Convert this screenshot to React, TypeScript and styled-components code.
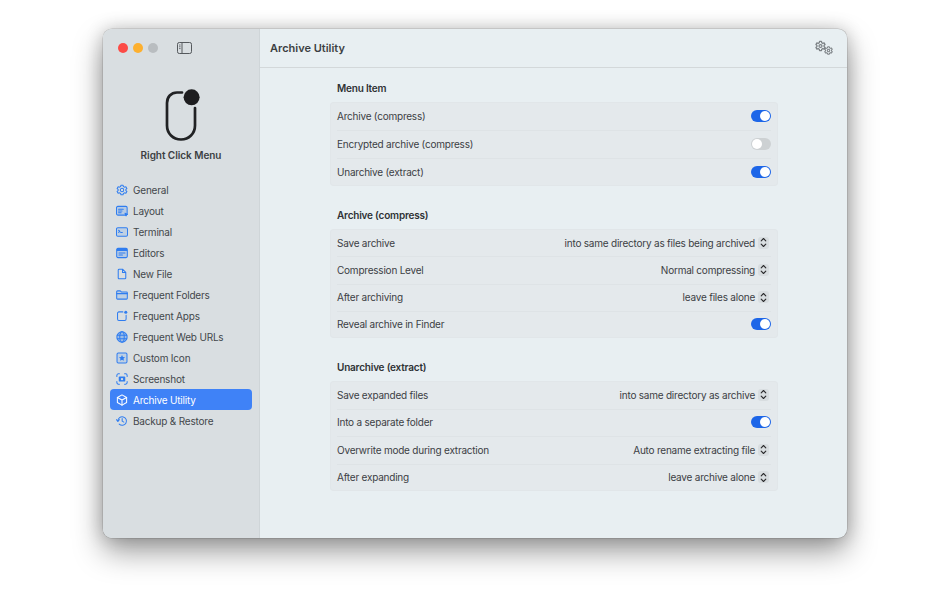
import React from 'react'
import styled, { createGlobalStyle } from 'styled-components'

const GlobalStyle = createGlobalStyle`
  html, body {
    margin: 0;
    padding: 0;
    background: #fff;
  }
  body {
    font-family: Inter, 'Liberation Sans', sans-serif;
    -webkit-font-smoothing: antialiased;
  }
`

const navItems = [
  { label: 'General', icon: 'gear' },
  { label: 'Layout', icon: 'layout' },
  { label: 'Terminal', icon: 'terminal' },
  { label: 'Editors', icon: 'editors' },
  { label: 'New File', icon: 'file' },
  { label: 'Frequent Folders', icon: 'folder' },
  { label: 'Frequent Apps', icon: 'apps' },
  { label: 'Frequent Web URLs', icon: 'globe' },
  { label: 'Custom Icon', icon: 'star' },
  { label: 'Screenshot', icon: 'screenshot' },
  { label: 'Archive Utility', icon: 'cube', active: true },
  { label: 'Backup & Restore', icon: 'restore' },
]

const sections = [
  {
    title: 'Menu Item',
    rowHeight: 28,
    rows: [
      { label: 'Archive (compress)', on: true },
      { label: 'Encrypted archive (compress)', on: false },
      { label: 'Unarchive (extract)', on: true },
    ],
  },
  {
    title: 'Archive (compress)',
    rowHeight: 27.25,
    rows: [
      { label: 'Save archive', value: 'into same directory as files being archived' },
      { label: 'Compression Level', value: 'Normal compressing' },
      { label: 'After archiving', value: 'leave files alone' },
      { label: 'Reveal archive in Finder', on: true },
    ],
  },
  {
    title: 'Unarchive (extract)',
    rowHeight: 27.5,
    rows: [
      { label: 'Save expanded files', value: 'into same directory as archive' },
      { label: 'Into a separate folder', on: true },
      { label: 'Overwrite mode during extraction', value: 'Auto rename extracting file' },
      { label: 'After expanding', value: 'leave archive alone' },
    ],
  },
]

const NavIcon = ({ name, active }: { name: string; active?: boolean }) => {
  const c = active ? '#fff' : '#2f7df0'
  const common = { fill: 'none', stroke: c, strokeWidth: 1.2, strokeLinejoin: 'round' as const, strokeLinecap: 'round' as const }
  return (
    <svg width="12" height="12" viewBox="0 0 14 14">
      {name === 'gear' && (
        <g {...common}>
          <path d="M5.8 1.4h2.4l.4 1.6 1.3.7 1.6-.5 1.2 2.1-1.2 1.1v1.2l1.2 1.1-1.2 2.1-1.6-.5-1.3.7-.4 1.6H5.8l-.4-1.6-1.3-.7-1.6.5-1.2-2.1 1.2-1.1V6.400L1.3 5.3l1.2-2.1 1.6.5 1.3-.7z" />
          <circle cx="7" cy="7" r="2" />
        </g>
      )}
      {name === 'layout' && (
        <g {...common}>
          <rect x="0.6" y="1.6" width="12.4" height="10.2" rx="1.5" fill={c} fillOpacity="0.2" />
          <path d="M3 5h5.500M3 7h4M3 9h3" />
          <path d="M10.500 9.500l3 1.400-1.300.5-.5 1.300z" fill={c} />
        </g>
      )}
      {name === 'terminal' && (
        <g {...common}>
          <rect x="0.6" y="2" width="12.800" height="10" rx="1.5" fill={c} fillOpacity="0.15" />
          <path d="M3 5l1.600 1.200L3 7.400M5.400 7.600h2" />
        </g>
      )}
      {name === 'editors' && (
        <g {...common}>
          <rect x="0.8" y="1.600" width="12.400" height="10.800" rx="1.5" fill={c} fillOpacity="0.2" />
          <path d="M1 3.400h12" strokeWidth="2.800" strokeLinecap="butt" />
          <path d="M3.500 7h7M3.500 9.400h4" />
        </g>
      )}
      {name === 'file' && (
        <path {...common} d="M2.600 2.400c0-.6.4-1 1-1h4L11.400 5v6.600c0 .6-.4 1-1 1H3.600c-.6 0-1-.4-1-1zM7.600 1.500v3.700h3.800" />
      )}
      {name === 'folder' && (
        <g {...common}>
          <path d="M0.800 3.200c0-.6.4-1 1-1h3.200l1.200 1.200h6c.6 0 1 .4 1 1v6.400c0 .6-.4 1-1 1H1.800c-.6 0-1-.4-1-1z" fill={c} fillOpacity="0.15" />
          <path d="M0.800 5.400h12.400" />
        </g>
      )}
      {name === 'apps' && (
        <g {...common}>
          <path d="M8 2.200H3.400c-.9 0-1.600.7-1.600 1.600v6.800c0 .9.7 1.600 1.600 1.600h6.800c.9 0 1.600-.7 1.600-1.600V6" />
          <circle cx="11.400" cy="2.600" r="1.800" fill={c} stroke="none" />
        </g>
      )}
      {name === 'globe' && (
        <g {...common}>
          <circle cx="7" cy="7" r="6" fill={c} fillOpacity="0.35" />
          <ellipse cx="7" cy="7" rx="2.600" ry="6" />
          <path d="M1.400 5h11.200M1.400 9h11.200" />
        </g>
      )}
      {name === 'star' && (
        <g {...common}>
          <rect x="1.200" y="1.200" width="11.600" height="11.600" rx="1.400" fill={c} fillOpacity="0.15" />
          <path d="M7 3.400l1.100 2.300 2.500.3-1.800 1.700.4 2.500L7 9.100l-2.200 1.100.4-2.500-1.800-1.700 2.500-.3z" fill={c} stroke="none" />
        </g>
      )}
      {name === 'screenshot' && (
        <g {...common}>
          <path d="M1 4V2.800C1 1.800 1.800 1 2.800 1H4M10 1h1.200c1 0 1.800.8 1.800 1.800V4M13 10v1.200c0 1-.8 1.800-1.800 1.800H10M4 13H2.800C1.800 13 1 12.200 1 11.200V10" />
          <rect x="3.200" y="4.200" width="7.600" height="5.800" rx="1" fill={c} stroke="none" />
          <circle cx="7" cy="7.100" r="1.400" fill="#d9dee1" stroke="none" />
        </g>
      )}
      {name === 'cube' && (
        <g {...common}>
          <path d="M7 1l5.400 3v6L7 13l-5.400-3V4z" />
          <path d="M1.600 4L7 7l5.400-3M7 7v6" />
        </g>
      )}
      {name === 'restore' && (
        <g {...common}>
          <path d="M2.200 7a5 5 0 1 1 1.500 3.600" />
          <path d="M.5 5.500l1.700 1.900L4 5.500" />
          <path d="M7.200 4.200v3l2 1.100" />
        </g>
      )}
    </svg>
  )
}

const SmallGear = ({ size, x, y }: { size: number; x: number; y: number }) => (
  <g transform={`translate(${x} ${y}) scale(${size / 14})`} fill="none" stroke="#7c8185" strokeWidth="1.6" strokeLinejoin="round">
    <path d="M5.800 1.200h2.400l.4 1.700 1.300.7 1.700-.5 1.200 2.100-1.300 1.200v1.200l1.300 1.200-1.200 2.100-1.700-.5-1.300.7-.4 1.700H5.800l-.4-1.700-1.300-.7-1.700.5-1.200-2.100 1.300-1.200V6.400L1.200 5.200l1.200-2.100 1.700.5 1.300-.7z" />
    <circle cx="7" cy="7" r="1.900" />
  </g>
)

const App = () => {
  return (
    <Page>
      <GlobalStyle />
      <Window>
        <Sidebar>
          <TrafficRow>
            <Light color="#fc4b46" />
            <Light color="#fdb02f" />
            <Light color="#b9bdc0" />
            <SidebarToggle>
              <svg width="15" height="12" viewBox="0 0 15 12" fill="none" stroke="#55595d" strokeWidth="1">
                <rect x="0.5" y="0.5" width="14" height="11" rx="1.800" />
                <path d="M5 0.500v11" />
                <path d="M2 3h1.600M2 4.800h1.600M2 6.600h1.600" strokeWidth="0.8" />
              </svg>
            </SidebarToggle>
          </TrafficRow>
          <Brand>
            <svg width="40" height="56" viewBox="0 0 40 56" fill="none">
              <path d="M21 3.500h-5C10 3.500 6 8 6 14v22.500c0 8 6 14 14 14s14-6 14-14V19" stroke="#212224" strokeWidth="2.700" strokeLinecap="round" />
              <circle cx="30.600" cy="8.300" r="8" fill="#1d1d1f" />
            </svg>
            <BrandName>Right Click Menu</BrandName>
          </Brand>
          <Nav>
            {navItems.map((item) => (
              <NavItem key={item.label} $active={item.active}>
                <NavIcon name={item.icon} active={item.active} />
                <span>{item.label}</span>
              </NavItem>
            ))}
          </Nav>
        </Sidebar>
        <Main>
          <Header>
            <HeaderTitle>Archive Utility</HeaderTitle>
            <svg width="20" height="16" viewBox="0 0 20 16">
              <SmallGear size={11} x={1} y={0.5} />
              <SmallGear size={9} x={10} y={6} />
            </svg>
          </Header>
          <Content>
            {sections.map((section) => (
              <Section key={section.title}>
                <SectionTitle>{section.title}</SectionTitle>
                <Group>
                  {section.rows.map((row) => (
                    <Row key={row.label} $height={section.rowHeight}>
                      <span>{row.label}</span>
                      {row.value ? (
                        <Select>
                          <span>{row.value}</span>
                          <Stepper>
                            <svg width="7" height="11" viewBox="0 0 7 11" fill="none" stroke="#2c2c2e" strokeWidth="1.1" strokeLinecap="round" strokeLinejoin="round">
                              <path d="M1.200 3.800L3.500 1.500l2.300 2.300M1.200 7.200l2.300 2.300 2.300-2.300" />
                            </svg>
                          </Stepper>
                        </Select>
                      ) : (
                        <Toggle $on={row.on} />
                      )}
                    </Row>
                  ))}
                </Group>
              </Section>
            ))}
          </Content>
        </Main>
      </Window>
    </Page>
  )
}

const Page = styled.div`
  width: 950px;
  height: 594px;
  padding: 29px 103px 56px;
  box-sizing: border-box;
  overflow: hidden;
  background: #fff;
`

const Window = styled.div`
  display: flex;
  height: 509px;
  border-radius: 9px;
  overflow: hidden;
  background: #e8eff2;
  box-shadow: 0 0 0 0.5px rgba(0, 0, 0, 0.18), 0 14px 30px rgba(0, 0, 0, 0.38), 0 0 18px rgba(0, 0, 0, 0.2);
`

const Sidebar = styled.aside`
  width: 157px;
  flex-shrink: 0;
  box-sizing: border-box;
  padding: 0 7px;
  background: #d9dee1;
  border-right: 1px solid #cfd5d8;
  display: flex;
  flex-direction: column;
`

const TrafficRow = styled.div`
  height: 38px;
  display: flex;
  align-items: center;
  gap: 5px;
  padding-left: 7.5px;
`

const Light = styled.span<{ color: string }>`
  width: 10px;
  height: 10px;
  border-radius: 50%;
  background: ${({ color }) => color};
`

const SidebarToggle = styled.span`
  display: flex;
  margin-left: 14px;
`

const Brand = styled.div`
  display: flex;
  flex-direction: column;
  align-items: center;
  margin-top: 22px;
  height: 90px;
`

const BrandName = styled.div`
  margin-top: 3px;
  font-size: 10px;
  font-weight: 600;
  line-height: 14px;
  letter-spacing: -0.05px;
  color: #3c3f43;
`

const Nav = styled.nav`
  display: flex;
  flex-direction: column;
`

const NavItem = styled.div<{ $active?: boolean }>`
  height: 21px;
  display: flex;
  align-items: center;
  gap: 5px;
  padding-left: 6px;
  border-radius: 4px;
  font-size: 10px;
  letter-spacing: -0.2px;
  color: ${({ $active }) => ($active ? '#fff' : '#43474b')};
  background: ${({ $active }) => ($active ? '#3f82f7' : 'transparent')};
`

const Main = styled.main`
  flex: 1;
  min-width: 0;
  display: flex;
  flex-direction: column;
`

const Header = styled.header`
  height: 39px;
  flex-shrink: 0;
  box-sizing: border-box;
  display: flex;
  align-items: center;
  justify-content: space-between;
  padding: 0 13px 0 10px;
  border-bottom: 1px solid #d3d8da;
`

const HeaderTitle = styled.h1`
  margin: 0;
  font-size: 11px;
  font-weight: 600;
  color: #3c3f43;
`

const Content = styled.div`
  padding: 13px 69px 0 70px;
  display: flex;
  flex-direction: column;
  gap: 22px;
`

const Section = styled.section`
  display: flex;
  flex-direction: column;
`

const SectionTitle = styled.h2`
  margin: 0 0 7px 7px;
  font-size: 10px;
  line-height: 14px;
  font-weight: 600;
  letter-spacing: -0.2px;
  color: #2f3235;
`

const Group = styled.div`
  padding: 0 7px;
  background: #e4e9ec;
  box-shadow: inset 0 0 0 1px #e1e6e9;
  border-radius: 4px;
`

const Row = styled.div<{ $height: number }>`
  height: ${({ $height }) => $height}px;
  display: flex;
  align-items: center;
  justify-content: space-between;
  font-size: 10px;
  letter-spacing: -0.22px;
  color: #3c4044;
  & + & {
    box-shadow: inset 0 1px 0 #dee3e6;
  }
`

const Select = styled.div`
  display: flex;
  align-items: center;
  gap: 3px;
  margin-right: 2px;
`

const Stepper = styled.span`
  width: 11px;
  height: 12px;
  display: flex;
  align-items: center;
  justify-content: center;
  background: #d8dde0;
  border-radius: 3px;
`

const Toggle = styled.span<{ $on?: boolean }>`
  position: relative;
  width: 20px;
  height: 12px;
  border-radius: 6px;
  background: ${({ $on }) => ($on ? '#1d66e8' : '#cdd1d3')};
  &::after {
    content: '';
    position: absolute;
    top: 1px;
    left: ${({ $on }) => ($on ? '9px' : '1px')};
    width: 10px;
    height: 10px;
    border-radius: 50%;
    background: #fff;
  }
`

export default App
